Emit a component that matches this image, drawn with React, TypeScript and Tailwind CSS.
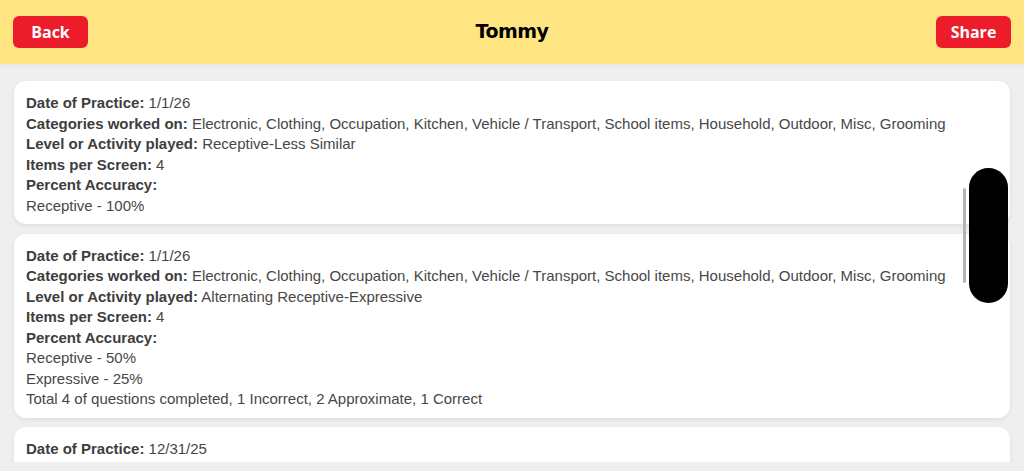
import * as React from "react"

type Entry = {
  date: string
  level: string
  accuracy: string[]
}

const CATEGORIES =
  "Electronic, Clothing, Occupation, Kitchen, Vehicle / Transport, School items, Household, Outdoor, Misc, Grooming"

const entries: Entry[] = [
  { date: "1/1/26", level: "Receptive-Less Similar", accuracy: ["Receptive - 100%"] },
  {
    date: "1/1/26",
    level: "Alternating Receptive-Expressive",
    accuracy: [
      "Receptive - 50%",
      "Expressive - 25%",
      "Total 4 of questions completed, 1 Incorrect, 2 Approximate, 1 Correct",
    ],
  },
  { date: "12/31/25", level: "Receptive-Less Similar", accuracy: ["Receptive - 75%"] },
]

function Row({ label, value }: { label: string; value?: string }) {
  return (
    <div>
      <span className="font-bold text-[#3e3e3e]">{label}</span>
      {value ? <span> {value}</span> : null}
    </div>
  )
}

function Card({ entry }: { entry: Entry }) {
  return (
    <div className="rounded-[12px] bg-white px-3 pt-[12px] pb-[8px] shadow-[0_2px_5px_rgba(0,0,0,0.07)]">
      <Row label="Date of Practice:" value={entry.date} />
      <Row label="Categories worked on:" value={CATEGORIES} />
      <Row label="Level or Activity played:" value={entry.level} />
      <Row label="Items per Screen:" value="4" />
      <Row label="Percent Accuracy:" />
      {entry.accuracy.map((line, i) => (
        <div key={i}>{line}</div>
      ))}
    </div>
  )
}

export default function App() {
  return (
    <div className="relative flex h-[471px] w-[1024px] flex-col overflow-hidden bg-[#efefef] font-['Liberation_Sans',Arial,sans-serif]">
      <header className="flex h-16 shrink-0 items-center justify-between bg-[#fee581] px-[13px]">
        <button className="h-8 w-[75px] rounded-[6px] bg-[#ec1c2a] pb-[1px] text-[16px] font-bold text-white font-['Open_Sans',sans-serif]">
          Back
        </button>
        <h1 className="pb-[1px] text-[19px] font-bold text-black font-['DejaVu_Sans',sans-serif] tracking-[-0.5px]">
          Tommy
        </h1>
        <button className="h-8 w-[75px] rounded-[6px] bg-[#ec1c2a] pb-[1px] text-[16px] font-bold text-white font-['Open_Sans',sans-serif]">
          Share
        </button>
      </header>

      <main className="min-h-0 flex-1 overflow-hidden shadow-[inset_0_4px_4px_-2px_rgba(0,0,0,0.04)]">
        <div className="flex flex-col gap-[9.5px] px-[14px] pt-[17px] text-[15px] leading-[20.5px] text-[#474747]">
          {entries.map((e, i) => (
            <Card key={i} entry={e} />
          ))}
        </div>
      </main>
      <div className="h-[9px] shrink-0 bg-[#efefef]" />

      {/* scroll indicator + overlay handle */}
      <div className="absolute left-[963px] top-[188px] h-[95px] w-[3px] rounded-full bg-[#b3b3b3]" />
      <div className="absolute left-[969px] top-[168px] h-[135px] w-[39px] rounded-full bg-black" />
    </div>
  )
}
